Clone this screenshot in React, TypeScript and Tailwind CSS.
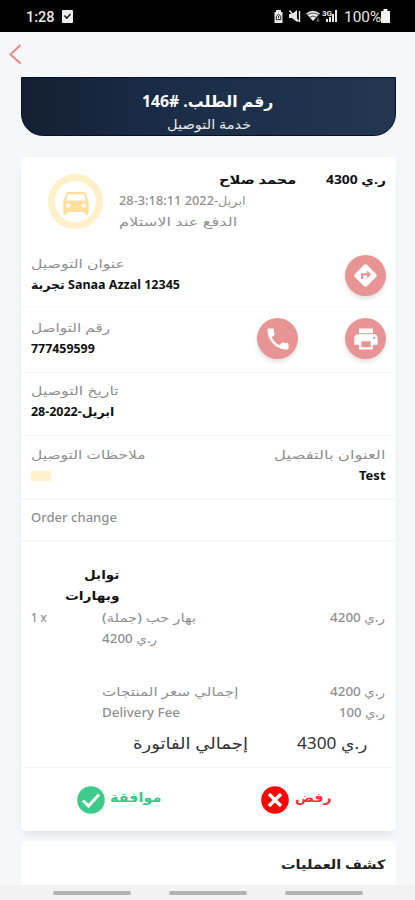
import { useLayoutEffect, useRef, useState, type ReactNode } from 'react';
import { MdDirections, MdPhone, MdPrint, MdDirectionsCar } from 'react-icons/md';

type TextProps = { w: number; children: string; className?: string; ltr?: boolean };

// One line of text, condensed or widened to fill its column width.
function Text({ w, children, className = '', ltr = false }: TextProps) {
  const ref = useRef<HTMLSpanElement>(null);
  const [scale, setScale] = useState(1);
  useLayoutEffect(() => {
    if (ref.current) setScale(w / ref.current.offsetWidth);
  }, [w]);
  return (
    <div dir="ltr" className={`h-[21px] shrink-0 leading-[21px] ${className}`} style={{ width: w }}>
      <span
        ref={ref}
        dir={ltr ? 'ltr' : 'rtl'}
        className="inline-block origin-left whitespace-nowrap"
        style={{ transform: `scaleX(${scale})` }}
      >
        {children}
      </span>
    </div>
  );
}

const muted = 'text-[12px] font-medium text-[#8f8f8f]';
const strong = 'text-[12px] font-bold text-[#111]';

function Round({ children }: { children: ReactNode }) {
  return (
    <div className="flex size-[41px] items-center justify-center rounded-full bg-[#e99494] text-white shadow-[0_3px_4px_rgba(0,0,0,0.12)]">
      {children}
    </div>
  );
}

function StatusBar() {
  return (
    <div className="flex h-8 items-center justify-between bg-black pr-[25px] pl-[26px] text-[#e8e8e8]">
      <div className="flex items-center gap-[7px]">
        <Text w={29} ltr className="mt-[2px] font-[Roboto] text-[15px] font-medium">1:28</Text>
        <svg width="11" height="13" viewBox="0 0 11 13">
          <rect width="11" height="13" rx="1" fill="#eee" />
          <path d="M2.5 5.5l2.300 2.700L8.500 4" fill="none" stroke="#111" strokeWidth="1.500" />
        </svg>
      </div>
      <div className="flex items-center">
        <svg width="66" height="16" viewBox="0 0 66 16" fill="#e8e8e8">
          <path d="M3 2h5v2h1.500v11h-8V4H3z" />
          <path d="M5.600 6.200l2.200 2.200v3.200H3.300V8.400zM5.600 8v2" fill="none" stroke="#222" />
          <path d="M16 6h3l5-4v12l-5-4h-3z" />
          <path d="M16.500 2.500l9 11M26.500 3v11" stroke="#e8e8e8" strokeWidth="1.400" />
          <path d="M33 5.500Q40 0 47 5.500L40 13z" />
          <path d="M34 7q6-4 12 0M36 9.500q4-3 8 0" fill="none" stroke="#111" strokeWidth="0.700" />
          <path d="M45 9.500v4m-1.300-1.300L45 13.500l1.300-1.300" fill="none" stroke="#888" />
          <text x="49" y="8" fontSize="8" fontWeight="700" fontFamily="Roboto">3G</text>
          <path d="M53 14v-3h2v3zM56 14v-5h2v5zM59 14V6h2v8zM62 14V2h2v12z" />
        </svg>
        <Text w={37} ltr className="mt-[2px] ml-[5px] font-[Roboto] text-[15px]">100%</Text>
        <svg width="9" height="14" viewBox="0 0 9 14" fill="#f2f2f2">
          <path d="M2.500 0h4v2H9v12H0V2h2.500z" />
        </svg>
      </div>
    </div>
  );
}

export default function App() {
  return (
    <div dir="ltr" className="relative h-[900px] w-[415px] overflow-hidden bg-[#f5f7f9] font-['Noto_Sans','DejaVu_Sans',sans-serif]">
      <StatusBar />
      <div className="h-[45px] pt-[12px] pl-[9px]">
        <svg width="12" height="21" viewBox="0 0 12 21" fill="none" stroke="#e98a86" strokeWidth="2">
          <path d="M11.500 1L1.500 10.500l10 9" />
        </svg>
      </div>

      <header className="mr-[19px] ml-[21px] flex h-[59px] flex-col items-center rounded-b-[22px] border border-[#080f2e] bg-linear-to-r from-[#141f32] via-[#1a2b46] via-35% to-[#22374f] pt-[13px] text-white">
        <Text w={131} className="mr-[2px] text-[16px] font-bold">رقم الطلب. #146</Text>
        <Text w={84} className="mt-[2px] text-[13px] text-[#e7e9ed]">خدمة التوصيل</Text>
      </header>

      <main className="mt-[21px] mr-[19px] ml-[21px] h-[674px] rounded-[5px] bg-white shadow-[0_6px_8px_-4px_rgba(70,90,110,0.16)]">
        <section className="flex h-[92px] items-start">
          <div className="mt-[17px] ml-[27px] flex size-[55px] items-center justify-center rounded-full border-[7px] border-[#fff0c9] bg-white">
            <MdDirectionsCar size={34} className="shrink-0 text-[#ffdf9d]" />
          </div>
          <div className="mt-[12px] ml-[16px] w-[178px]">
            <Text w={78} className={`ml-[100px] ${strong}`}>محمد صلاح</Text>
            <Text w={127} ltr className={muted}>28-3:18:11 2022-ابريل</Text>
            <Text w={118} className={muted}>الدفع عند الاستلام</Text>
          </div>
          <Text w={60} className={`mt-[12px] ml-[29px] ${strong}`}>ر.ي 4300</Text>
        </section>

        <section className="flex h-[58px] justify-between border-b border-[#fafafa] pr-[10px] pl-[10px]">
          <div className="pt-[4px]">
            <Text w={94} className={muted}>عنوان التوصيل</Text>
            <Text w={149} ltr className={strong}>تجربة Sanaa Azzal 12345</Text>
          </div>
          <div className="pt-[6px]"><Round><MdDirections size={27} /></Round></div>
        </section>

        <section className="flex h-[66px] border-b border-[#f7f7f7] pr-[10px] pl-[10px]">
          <div className="flex-1 pt-[10px]">
            <Text w={79} className={muted}>رقم التواصل</Text>
            <Text w={64} ltr className={strong}>777459599</Text>
          </div>
          <div className="flex gap-[47px] pt-[11px]">
            <Round><MdPhone size={28} /></Round>
            <Round><MdPrint size={28} /></Round>
          </div>
        </section>

        <section className="h-[63px] border-b border-[#f7f7f7] pt-[7px] pl-[10px]">
          <Text w={88} className={muted}>تاريخ التوصيل</Text>
          <Text w={83} ltr className={strong}>28-2022-ابريل</Text>
        </section>

        <section className="flex h-[64px] justify-between border-b-2 border-[#f7f7f7] pt-[8px] pr-[11px] pl-[10px]">
          <div>
            <Text w={115} className={muted}>ملاحظات التوصيل</Text>
            <div className="mt-[6px] h-[10px] w-5 bg-[#fff1cb]" />
          </div>
          <div className="flex flex-col items-end">
            <Text w={111} className={muted}>العنوان بالتفصيل</Text>
            <Text w={26} ltr className={strong}>Test</Text>
          </div>
        </section>

        <section className="h-[42px] border-b-2 border-[#f7f7f7] pt-[7px] pl-[10px]">
          <Text w={86} ltr className={muted}>Order change</Text>
        </section>

        <section className="h-[132px] pt-[22px] pr-[11px] pl-[10px]">
          <div className="flex w-[88px] flex-col items-end">
            <Text w={35} className={strong}>توابل</Text>
            <Text w={54} className={strong}>وبهارات</Text>
          </div>
          <div className="flex pt-px">
            <Text w={16} ltr className={muted}>1 x</Text>
            <div className="ml-[55px] flex-1">
              <Text w={94} className={muted}>بهار حب (جملة)</Text>
              <Text w={55} className={muted}>ر.ي 4200</Text>
            </div>
            <Text w={55} className={muted}>ر.ي 4200</Text>
          </div>
        </section>

        <section className="h-[94px] border-b border-[#f7f7f7] pt-[7px] pr-[11px] pl-[81px]">
          <div className="flex justify-between">
            <Text w={137} className={muted}>إجمالي سعر المنتجات</Text>
            <Text w={55} className={muted}>ر.ي 4200</Text>
          </div>
          <div className="flex justify-between">
            <Text w={78} ltr className={muted}>Delivery Fee</Text>
            <Text w={46} className={muted}>ر.ي 100</Text>
          </div>
          <div className="mt-[10px] flex justify-between pr-[18px] pl-[31px] text-[16px] text-[#333]">
            <Text w={115}>إجمالي الفاتورة</Text>
            <Text w={70}>ر.ي 4300</Text>
          </div>
        </section>

        <section className="flex h-[63px] pt-[18px] pl-[56px]">
          <svg width="28" height="28" viewBox="0 0 28 28">
            <circle cx="14" cy="14" r="13.800" fill="#3dcb89" />
            <path d="M6 14.500l5.500 5.500L22 8.500" fill="none" stroke="white" strokeWidth="3" />
          </svg>
          <Text w={51} className="mt-px ml-[5px] text-[13px] font-bold text-[#35c987]">موافقة</Text>
          <svg className="ml-[100px]" width="28" height="28" viewBox="0 0 28 28">
            <circle cx="14" cy="14" r="13.800" fill="#fb0505" />
            <path d="M8 8l12 12M20 8L8 20" fill="none" stroke="white" strokeWidth="3.500" />
          </svg>
          <Text w={37} className="mt-px ml-[6px] text-[13px] font-bold text-[#f32c35]">رفض</Text>
        </section>
      </main>

      <section className="mt-[11px] mr-[19px] ml-[21px] flex h-[70px] justify-end rounded-[5px] bg-white pt-[12px] pr-[10px]">
        <Text w={105} className="text-[13px] font-bold text-[#222]">كشف العمليات</Text>
      </section>

      <nav className="absolute inset-x-0 bottom-0 flex h-[15px] gap-[38px] bg-[#f2f2f2] pt-[6px] pl-[53px]">
        <div className="h-[4px] w-[78px] rounded-full bg-[#b2b2b2]" />
        <div className="h-[4px] w-[78px] rounded-full bg-[#b2b2b2]" />
        <div className="h-[4px] w-[78px] rounded-full bg-[#b2b2b2]" />
      </nav>
    </div>
  );
}
